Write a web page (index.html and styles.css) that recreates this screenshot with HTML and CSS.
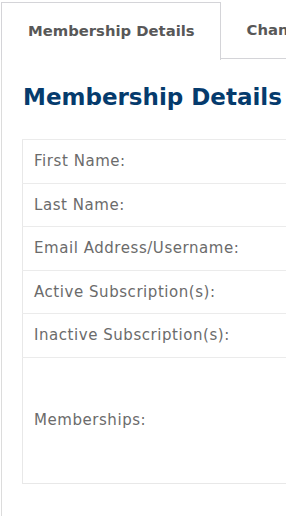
FILE: index.html
```html
<!DOCTYPE html>
<html lang="en">
<head>
    <meta charset="UTF-8">
    <meta name="viewport" content="width=device-width, initial-scale=1.0">
    <title>Membership Details</title>
    <link rel="stylesheet" href="styles.css">
</head>
<body>
    <div class="tabs">
        <div class="tab active">Membership Details</div>
        <div class="tab">Change Password</div>
    </div>
    <div class="panel">
        <h2>Membership Details</h2>
        <table class="details">
            <tr><th>First Name:</th><td></td></tr>
            <tr><th>Last Name:</th><td></td></tr>
            <tr><th>Email Address/Username:</th><td></td></tr>
            <tr><th>Active Subscription(s):</th><td></td></tr>
            <tr><th>Inactive Subscription(s):</th><td></td></tr>
            <tr class="tall"><th>Memberships:</th><td></td></tr>
        </table>
    </div>
</body>
</html>
```

FILE: styles.css
```css
html {
    overflow: hidden;
}
body {
    font-family: "DejaVu Sans", sans-serif;
    margin: 0;
    padding: 2px 0 0 1px;
    background: white;
    color: #666;
}
.tabs {
    display: flex;
    white-space: nowrap;
}
.tab {
    padding: 0 25px 0 26px;
    height: 56px;
    line-height: 56px;
    font-size: 14.8px;
    font-weight: bold;
    color: #585858;
    border-bottom: 1px solid #d4d4d8;
}
.tab.active {
    border: 1px solid #d4d4d8;
    border-bottom: none;
    height: 57px;
    line-height: 55px;
}
.panel {
    border-left: 1px solid #dcdcdc;
    padding: 0 0 40px 20px;
    min-height: 500px;
}
.panel h2 {
    margin: 0;
    padding: 22px 0 0 1px;
    height: 79px;
    box-sizing: border-box;
    font-size: 23px;
    line-height: 30px;
    color: #053b6d;
    white-space: nowrap;
}
.details {
    border-collapse: collapse;
    width: 420px;
    border: 1px solid #e8e8e8;
}
.details th, .details td {
    border-top: 1px solid #ebebeb;
    padding: 12px 11px;
    font-size: 15px;
    letter-spacing: 0.55px;
    line-height: 18.5px;
    font-weight: normal;
    text-align: left;
    white-space: nowrap;
}
.details th {
    width: 210px;
    color: #6b6b6b;
}
.details tr.tall th {
    padding-top: 53.5px;
    padding-bottom: 53.5px;
}
```
